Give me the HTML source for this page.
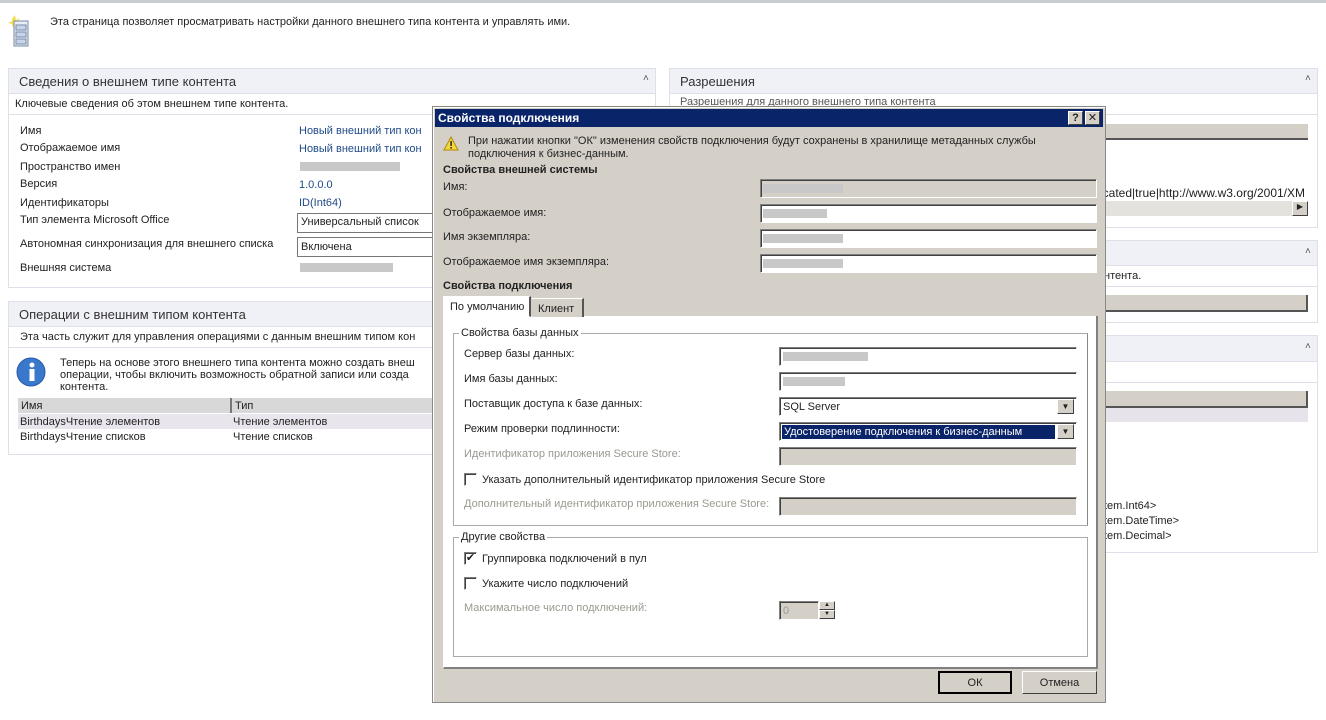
<!DOCTYPE html>
<html><head><meta charset="utf-8"><style>
*{box-sizing:border-box;margin:0;padding:0}
body{width:1326px;height:720px;background:#fff;position:relative;overflow:hidden;font-family:"Liberation Sans","DejaVu Sans",sans-serif;font-size:11px;color:#222}
.a{position:absolute;white-space:nowrap}
.ph{position:absolute;background:#f0f1f6;border:1px solid #dde0e8;font-size:13px;color:#333;padding:5px 10px}
.pb{position:absolute;border:1px solid #dde0e8;background:#fff}
.car{position:absolute;font-size:10px;color:#555}
.lnk{color:#1f4a8a}
.blur{position:absolute;background:#c8c8c8}
.dlg{position:absolute;left:432px;top:106px;width:674px;height:597px;background:#d4d0c8;border:1px solid #888;box-shadow:inset 1px 1px 0 #fff}
.tb{position:absolute;left:2px;top:2px;width:668px;height:18px;background:#0a246a;color:#fff;font-weight:bold;font-size:12px;padding:2px 3px}
.inp{position:absolute;height:20px;background:#fff;border:1px solid;border-color:#808080 #fff #fff #808080;box-shadow:inset 1px 1px 0 #404040}
.dis{background:#d4d0c8}
.btn{position:absolute;background:#d4d0c8;border:1px solid;border-color:#fff #404040 #404040 #fff;text-align:center;font-size:11px}
.gray{color:#9a9890}
.cb{position:absolute;width:13px;height:13px;background:#fff;border:1px solid;border-color:#808080 #fff #fff #808080;box-shadow:inset 1px 1px 0 #404040}
</style></head><body>
<div class="a" style="left:0;top:0;width:1326px;height:3px;background:#c8cbd2"></div>
<svg class="a" style="left:8px;top:15px" width="24" height="32"><polygon points="4,4 7,0 8,5 12,3 9,7 12,10 7,9 5,13 4,9 0,8 4,6" fill="#f5e050"/><rect x="6" y="6" width="14" height="25" fill="#e8ecf4" stroke="#7a8aa8"/><rect x="8" y="10" width="10" height="5" fill="#c8d4ea" stroke="#7a8aa8"/><rect x="8" y="17" width="10" height="5" fill="#c8d4ea" stroke="#7a8aa8"/><rect x="8" y="24" width="10" height="5" fill="#c8d4ea" stroke="#7a8aa8"/></svg>
<div class="a" style="left:50px;top:16px;font-size:11px">Эта страница позволяет просматривать настройки данного внешнего типа контента и управлять ими.</div>

<!-- left panel 1 -->
<div class="pb" style="left:8px;top:68px;width:648px;height:220px"></div>
<div class="ph" style="left:8px;top:68px;width:648px;height:26px">Сведения о внешнем типе контента</div>
<div class="car" style="left:643px;top:73px">˄</div>
<div class="a" style="left:8px;top:95px;width:648px;height:20px;border-bottom:1px solid #dde0e8"></div>
<div class="a" style="left:15px;top:98px">Ключевые сведения об этом внешнем типе контента.</div>
<div class="a" style="left:20px;top:125px">Имя</div>
<div class="a lnk" style="left:299px;top:125px">Новый внешний тип кон</div>
<div class="a" style="left:20px;top:142px">Отображаемое имя</div>
<div class="a lnk" style="left:299px;top:143px">Новый внешний тип кон</div>
<div class="a" style="left:20px;top:161px">Пространство имен</div>
<div class="blur" style="left:300px;top:162px;width:100px;height:9px"></div>
<div class="a" style="left:20px;top:178px">Версия</div>
<div class="a lnk" style="left:299px;top:179px">1.0.0.0</div>
<div class="a" style="left:20px;top:197px">Идентификаторы</div>
<div class="a lnk" style="left:299px;top:197px">ID(Int64)</div>
<div class="a" style="left:20px;top:214px">Тип элемента Microsoft Office</div>
<div class="a" style="left:297px;top:213px;width:140px;height:20px;border:1px solid #777;padding:2px 3px">Универсальный список</div>
<div class="a" style="left:20px;top:238px">Автономная синхронизация для внешнего списка</div>
<div class="a" style="left:297px;top:237px;width:140px;height:20px;border:1px solid #777;padding:3px 3px">Включена</div>
<div class="a" style="left:20px;top:262px">Внешняя система</div>
<div class="blur" style="left:300px;top:263px;width:93px;height:9px"></div>

<!-- left panel 2 -->
<div class="pb" style="left:8px;top:301px;width:648px;height:154px"></div>
<div class="ph" style="left:8px;top:301px;width:648px;height:26px">Операции с внешним типом контента</div>
<div class="a" style="left:8px;top:327px;width:648px;height:21px;border-bottom:1px solid #dde0e8"></div>
<div class="a" style="left:20px;top:331px">Эта часть служит для управления операциями с данным внешним типом кон</div>
<svg class="a" style="left:15px;top:356px" width="32" height="32"><circle cx="16" cy="16" r="14" fill="#3a78cc" stroke="#2a5aa8"/><circle cx="17" cy="9" r="2.5" fill="#fff"/><rect x="14.5" y="13" width="5" height="12" fill="#fff"/></svg>
<div class="a" style="left:60px;top:357px;line-height:12px">Теперь на основе этого внешнего типа контента можно создать внеш<br>операции, чтобы включить возможность обратной записи или созда<br>контента.</div>
<div class="a" style="left:18px;top:398px;width:420px;height:15px;background:#d8d8d8"></div>
<div class="a" style="left:230px;top:398px;width:2px;height:15px;background:#777"></div>
<div class="a" style="left:21px;top:400px">Имя</div><div class="a" style="left:235px;top:400px">Тип</div>
<div class="a" style="left:18px;top:414px;width:420px;height:15px;background:#e8e6ec"></div>
<div class="a" style="left:20px;top:416px">BirthdaysЧтение элементов</div><div class="a" style="left:233px;top:416px">Чтение элементов</div>
<div class="a" style="left:20px;top:431px">BirthdaysЧтение списков</div><div class="a" style="left:233px;top:431px">Чтение списков</div>

<!-- right panels -->
<div class="pb" style="left:669px;top:68px;width:649px;height:160px"></div>
<div class="ph" style="left:669px;top:68px;width:649px;height:26px">Разрешения</div>
<div class="car" style="left:1305px;top:73px">˄</div>
<div class="a" style="left:669px;top:94px;width:649px;height:21px;border-bottom:1px solid #dde0e8"></div>
<div class="a" style="left:680px;top:96px;color:#555">Разрешения для данного внешнего типа контента</div>
<div class="a" style="left:1090px;top:124px;width:218px;height:16px;background:#d4d0c8;border-bottom:2px solid #555"></div>
<div class="a" style="left:1100px;top:186px;font-size:12px">icated|true|http://www.w3.org/2001/XM</div>
<div class="a" style="left:1100px;top:201px;width:208px;height:15px;background:#e4e2dc"></div>
<div class="a" style="left:1292px;top:201px;width:16px;height:15px;background:#d4d0c8;border:1px solid;border-color:#fff #404040 #404040 #fff;font-size:8px;text-align:center">▶</div>

<div class="pb" style="left:669px;top:240px;width:649px;height:83px"></div>
<div class="ph" style="left:669px;top:240px;width:649px;height:26px"></div>
<div class="car" style="left:1305px;top:246px">˄</div>
<div class="a" style="left:669px;top:266px;width:649px;height:21px;border-bottom:1px solid #dde0e8"></div>
<div class="a" style="left:1104px;top:270px">нтента.</div>
<div class="a" style="left:1090px;top:295px;width:218px;height:17px;background:#d4d0c8;border-bottom:2px solid #555;border-right:2px solid #555"></div>

<div class="pb" style="left:669px;top:335px;width:649px;height:218px"></div>
<div class="ph" style="left:669px;top:335px;width:649px;height:27px"></div>
<div class="car" style="left:1305px;top:341px">˄</div>
<div class="a" style="left:669px;top:362px;width:649px;height:21px;border-bottom:1px solid #dde0e8"></div>
<div class="a" style="left:1090px;top:391px;width:218px;height:17px;background:#d4d0c8;border-bottom:2px solid #555;border-right:2px solid #555"></div>
<div class="a" style="left:1090px;top:408px;width:218px;height:14px;background:#e6e4ea"></div>
<div class="a" style="left:1104px;top:500px">tem.Int64&gt;</div>
<div class="a" style="left:1104px;top:515px">tem.DateTime&gt;</div>
<div class="a" style="left:1104px;top:530px">tem.Decimal&gt;</div>

<!-- dialog -->
<div class="dlg">
<div class="tb">Свойства подключения</div>
<div class="btn" style="left:635px;top:4px;width:15px;height:14px;font-weight:bold;font-size:11px;line-height:12px">?</div>
<div class="btn" style="left:652px;top:4px;width:15px;height:14px;font-size:11px;line-height:12px">✕</div>
<svg class="a" style="left:10px;top:29px" width="16" height="15"><polygon points="8,1 15,14 1,14" fill="#f8d838" stroke="#b08810"/><rect x="7.3" y="5" width="1.6" height="5" fill="#333"/><rect x="7.3" y="11" width="1.6" height="1.6" fill="#333"/></svg>
<div class="a" style="left:35px;top:28px;line-height:13px">При нажатии кнопки "ОК" изменения свойств подключения будут сохранены в хранилище метаданных службы<br>подключения к бизнес-данным.</div>
<div class="a" style="left:10px;top:57px;font-weight:bold;font-size:11px">Свойства внешней системы</div>
<div class="a" style="left:10px;top:74px">Имя:</div>
<div class="inp dis" style="left:327px;top:72px;width:337px;height:19px"></div><div class="blur" style="left:330px;top:77px;width:80px;height:9px"></div>
<div class="a" style="left:10px;top:100px">Отображаемое имя:</div>
<div class="inp" style="left:327px;top:97px;width:337px;height:19px"></div><div class="blur" style="left:330px;top:102px;width:64px;height:9px"></div>
<div class="a" style="left:10px;top:124px">Имя экземпляра:</div>
<div class="inp" style="left:327px;top:122px;width:337px;height:19px"></div><div class="blur" style="left:330px;top:127px;width:80px;height:9px"></div>
<div class="a" style="left:10px;top:149px">Отображаемое имя экземпляра:</div>
<div class="inp" style="left:327px;top:147px;width:337px;height:19px"></div><div class="blur" style="left:330px;top:152px;width:80px;height:9px"></div>
<div class="a" style="left:10px;top:173px;font-weight:bold;font-size:11px">Свойства подключения</div>
<div class="a" style="left:10px;top:209px;width:655px;height:353px;background:#fff;border-right:2px solid #808080;border-bottom:2px solid #808080;border-left:1px solid #fff"></div>
<div class="a" style="left:10px;top:189px;width:88px;height:21px;background:#fff;border:1px solid #fff;border-right:2px solid #555;padding:4px 6px">По умолчанию</div>
<div class="a" style="left:99px;top:191px;width:52px;height:19px;background:#d4d0c8;border-top:1px solid #fff;border-right:2px solid #555;padding:4px 6px">Клиент</div>
<div class="a" style="left:20px;top:226px;width:635px;height:193px;border:1px solid #aaa;border-right-color:#888"></div>
<div class="a" style="left:26px;top:220px;background:#fff;padding:0 2px">Свойства базы данных</div>
<div class="a" style="left:31px;top:241px">Сервер базы данных:</div>
<div class="inp" style="left:346px;top:240px;width:298px;height:19px"></div><div class="blur" style="left:350px;top:245px;width:85px;height:9px"></div>
<div class="a" style="left:31px;top:266px">Имя базы данных:</div>
<div class="inp" style="left:346px;top:265px;width:298px;height:19px"></div><div class="blur" style="left:350px;top:270px;width:62px;height:9px"></div>
<div class="a" style="left:31px;top:291px">Поставщик доступа к базе данных:</div>
<div class="inp" style="left:346px;top:290px;width:298px;height:19px;padding:3px 3px">SQL Server</div>
<div class="btn" style="left:624px;top:292px;width:17px;height:15px;font-size:8px;line-height:13px">▼</div>
<div class="a" style="left:31px;top:316px">Режим проверки подлинности:</div>
<div class="inp" style="left:346px;top:315px;width:298px;height:19px"></div>
<div class="a" style="left:349px;top:318px;width:273px;height:14px;background:#0a246a;color:#fff;padding:1px 2px">Удостоверение подключения к бизнес-данным</div>
<div class="btn" style="left:624px;top:317px;width:17px;height:15px;font-size:8px;line-height:13px">▼</div>
<div class="a gray" style="left:31px;top:341px">Идентификатор приложения Secure Store:</div>
<div class="inp dis" style="left:346px;top:340px;width:298px;height:19px"></div>
<div class="cb" style="left:31px;top:366px"></div>
<div class="a" style="left:49px;top:367px">Указать дополнительный идентификатор приложения Secure Store</div>
<div class="a gray" style="left:31px;top:391px">Дополнительный идентификатор приложения Secure Store:</div>
<div class="inp dis" style="left:346px;top:390px;width:298px;height:19px"></div>
<div class="a" style="left:20px;top:430px;width:635px;height:120px;border:1px solid #aaa"></div>
<div class="a" style="left:26px;top:424px;background:#fff;padding:0 2px">Другие свойства</div>
<div class="cb" style="left:31px;top:445px;font-size:11px;line-height:10px;text-align:center">✔</div>
<div class="a" style="left:49px;top:446px">Группировка подключений в пул</div>
<div class="cb" style="left:31px;top:470px"></div>
<div class="a" style="left:49px;top:471px">Укажите число подключений</div>
<div class="a gray" style="left:31px;top:495px">Максимальное число подключений:</div>
<div class="inp dis" style="left:346px;top:494px;width:40px;height:19px;padding:3px 3px;color:#999">0</div>
<div class="btn" style="left:386px;top:494px;width:16px;height:9px;font-size:6px;line-height:7px">▲</div>
<div class="btn" style="left:386px;top:503px;width:16px;height:9px;font-size:6px;line-height:7px">▼</div>
<div class="btn" style="left:505px;top:564px;width:74px;height:23px;border:2px solid #000;padding-top:4px">ОК</div>
<div class="btn" style="left:589px;top:564px;width:75px;height:23px;padding-top:5px">Отмена</div>
</div>
</body></html>
